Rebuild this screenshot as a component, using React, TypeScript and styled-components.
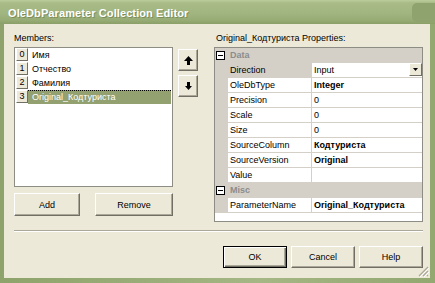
import React from 'react';
import styled, { createGlobalStyle } from 'styled-components';

const GlobalStyle = createGlobalStyle`
  html, body { margin: 0; padding: 0; background: #fff; }
  body { font-family: "Liberation Sans", Arial, sans-serif; font-size: 9px; color: #000; }
  * { box-sizing: border-box; }
`;

const Window = styled.div`
  width: 435px;
  height: 283px;
  display: flex;
  flex-direction: column;
  background: #93a771;
  overflow: hidden;
`;

const TitleBar = styled.div`
  height: 24px;
  flex: none;
  display: flex;
  align-items: center;
  padding: 1px 0 0 8px;
  background: linear-gradient(#bccd9b 0%, #a9bc88 12%, #a1b580 55%, #97ab75 85%, #8a9e68 100%);
`;

const TitleText = styled.span`
  color: #fff;
  font-weight: bold;
  font-size: 11px;
  text-shadow: 1px 1px 0 #7c8f5a;
  letter-spacing: 0.1px;
`;

const CaptionStub = styled.div`
  margin-left: auto;
  width: 23px;
  height: 19px;
  border-radius: 5px 0 0 5px;
  background: #8fa36e;
`;

const Frame = styled.div`
  flex: 1;
  display: flex;
  padding: 0 5px 5px 4px;
  background: linear-gradient(90deg, #8ea26b, #a4b784 60%, #93a771);
`;

const Client = styled.div`
  flex: 1;
  position: relative;
  display: flex;
  flex-direction: column;
  background: #ece9d8;
  padding: 8px 7px 0 10px;
`;

const Top = styled.div`
  display: flex;
  height: 190px;
`;

const Column = styled.div<{ $w: number }>`
  width: ${p => p.$w}px;
  flex: none;
  display: flex;
  flex-direction: column;
`;

const Label = styled.div<{ $indent?: number }>`
  height: 15px;
  line-height: 12px;
  padding-left: ${p => p.$indent ?? 0}px;
  white-space: nowrap;
`;

const ListBox = styled.div`
  height: 140px;
  background: #fff;
  border: 1px solid #8d8c85;
  padding-top: 0;
`;

const ListRow = styled.div`
  height: 14px;
  display: flex;
  padding: 0 1px 0 1px;
`;

const IndexCell = styled.div`
  width: 12px;
  height: 13px;
  flex: none;
  background: #ece9d8;
  border: 1px solid;
  border-color: #fff #716f64 #716f64 #fff;
  line-height: 11px;
  text-align: center;
  font-size: 9px;
`;

const ItemText = styled.div<{ $selected?: boolean }>`
  flex: 1;
  height: 14px;
  line-height: 13px;
  padding-left: 4px;
  background: ${p => (p.$selected ? '#93a070' : 'transparent')};
  color: ${p => (p.$selected ? '#fff' : '#000')};
  border-top: 1px dotted ${p => (p.$selected ? '#000' : 'transparent')};
  white-space: nowrap;
`;

const ButtonRow = styled.div<{ $gap: number; $end?: boolean }>`
  display: flex;
  gap: ${p => p.$gap}px;
  justify-content: ${p => (p.$end ? 'flex-end' : 'flex-start')};
`;

const Button = styled.button<{ $w: number; $h?: number; $default?: boolean }>`
  width: ${p => p.$w}px;
  height: ${p => p.$h ?? 23}px;
  flex: none;
  padding: 0;
  background: #ece9d8;
  font-family: "Liberation Sans", Arial, sans-serif;
  font-size: 9px;
  color: #000;
  border: 1px solid;
  border-color: ${p => (p.$default ? '#000' : '#fff #716f64 #716f64 #fff')};
  box-shadow: ${p =>
    p.$default
      ? 'inset 1px 1px 0 #fff, inset -1px -1px 0 #716f64, inset -2px -2px 0 #aca899'
      : 'inset -1px -1px 0 #aca899'};
  display: flex;
  align-items: center;
  justify-content: center;
`;

const ArrowColumn = styled.div`
  width: 20px;
  flex: none;
  margin-left: 5px;
  margin-right: 16px;
  padding-top: 17px;
  display: flex;
  flex-direction: column;
  gap: 4px;
`;

const Grid = styled.div`
  height: 175px;
  border: 1px solid #8d8c85;
  background: #fff;
  overflow: hidden;
`;

const GridRow = styled.div<{ $category?: boolean }>`
  height: 15px;
  display: flex;
  background: ${p => (p.$category ? '#d4d0c8' : '#fff')};
`;

const Gutter = styled.div`
  width: 13px;
  flex: none;
  background: #d4d0c8;
  display: flex;
  align-items: center;
  padding-left: 1px;
`;

const Expander = styled.div`
  width: 9px;
  height: 9px;
  border: 1px solid #000;
  background: #fff;
  display: flex;
  align-items: center;
  justify-content: center;
  &::after {
    content: '';
    width: 5px;
    height: 1px;
    background: #000;
  }
`;

const CategoryName = styled.div`
  padding-left: 2px;
  line-height: 15px;
  font-weight: bold;
  color: #8c8c8c;
`;

const NameCell = styled.div<{ $selected?: boolean }>`
  width: 84px;
  flex: none;
  padding-left: 2px;
  line-height: 14px;
  border-right: 1px solid #d4d0c8;
  border-bottom: 1px solid #d4d0c8;
  background: ${p => (p.$selected ? '#d4d0c8' : '#fff')};
  white-space: nowrap;
  overflow: hidden;
`;

const ValueCell = styled.div<{ $bold?: boolean }>`
  flex: 1;
  display: flex;
  min-width: 0;
  padding-left: 2px;
  line-height: 14px;
  border-bottom: 1px solid #d4d0c8;
  font-weight: ${p => (p.$bold ? 'bold' : 'normal')};
  white-space: nowrap;
  overflow: hidden;
`;

const DropButton = styled.div`
  margin-left: auto;
  width: 13px;
  height: 13px;
  flex: none;
  background: #ece9d8;
  border: 1px solid;
  border-color: #fff #716f64 #716f64 #fff;
  display: flex;
  align-items: center;
  justify-content: center;
`;

const Separator = styled.div`
  margin-top: 8px;
  height: 2px;
  border-top: 1px solid #aca899;
  border-bottom: 1px solid #fff;
`;

const Footer = styled.div`
  margin-top: 14px;
`;

const Grip = styled.svg`
  position: absolute;
  right: 1px;
  bottom: 1px;
`;

const UpArrow = () => (
  <svg width="9" height="9" viewBox="0 0 9 9">
    <path d="M4.5 0 L9 5 L6 5 L6 9 L3 9 L3 5 L0 5 Z" fill="#000" />
  </svg>
);

const DownArrow = () => (
  <svg width="7" height="8" viewBox="0 0 7 8">
    <path d="M2 0 L5 0 L5 4 L7 4 L3.5 8 L0 4 L2 4 Z" fill="#000" />
  </svg>
);

const members = ['Имя', 'Отчество', 'Фамилия', 'Original_Кодтуриста'];

type Prop = { name: string; value: string; bold?: boolean; selected?: boolean; drop?: boolean };

const dataProps: Prop[] = [
  { name: 'Direction', value: 'Input', selected: true, drop: true },
  { name: 'OleDbType', value: 'Integer', bold: true },
  { name: 'Precision', value: '0' },
  { name: 'Scale', value: '0' },
  { name: 'Size', value: '0' },
  { name: 'SourceColumn', value: 'Кодтуриста', bold: true },
  { name: 'SourceVersion', value: 'Original', bold: true },
  { name: 'Value', value: '' },
];

const miscProps: Prop[] = [{ name: 'ParameterName', value: 'Original_Кодтуриста', bold: true }];

const PropRow = ({ p }: { p: Prop }) => (
  <GridRow>
    <Gutter />
    <NameCell $selected={p.selected}>{p.name}</NameCell>
    <ValueCell $bold={p.bold}>
      {p.value}
      {p.drop && (
        <DropButton>
          <svg width="5" height="3" viewBox="0 0 5 3">
            <path d="M0 0 L5 0 L2.5 3 Z" fill="#000" />
          </svg>
        </DropButton>
      )}
    </ValueCell>
  </GridRow>
);

const Category = ({ name }: { name: string }) => (
  <GridRow $category>
    <Gutter>
      <Expander />
    </Gutter>
    <CategoryName>{name}</CategoryName>
  </GridRow>
);

export default function App() {
  return (
    <>
      <GlobalStyle />
      <Window>
        <TitleBar>
          <TitleText>OleDbParameter Collection Editor</TitleText>
          <CaptionStub />
        </TitleBar>
        <Frame>
          <Client>
            <Top>
              <Column $w={159}>
                <Label>Members:</Label>
                <ListBox>
                  {members.map((m, i) => (
                    <ListRow key={m}>
                      <IndexCell>{i}</IndexCell>
                      <ItemText $selected={i === 3}>{m}</ItemText>
                    </ListRow>
                  ))}
                </ListBox>
                <ButtonRow $gap={15} style={{ marginTop: 6 }}>
                  <Button $w={66}>Add</Button>
                  <Button $w={78}>Remove</Button>
                </ButtonRow>
              </Column>
              <ArrowColumn>
                <Button $w={20} $h={22}>
                  <UpArrow />
                </Button>
                <Button $w={20} $h={22}>
                  <DownArrow />
                </Button>
              </ArrowColumn>
              <Column $w={209}>
                <Label $indent={2}>Original_Кодтуриста Properties:</Label>
                <Grid>
                  <Category name="Data" />
                  {dataProps.map(p => (
                    <PropRow key={p.name} p={p} />
                  ))}
                  <Category name="Misc" />
                  {miscProps.map(p => (
                    <PropRow key={p.name} p={p} />
                  ))}
                </Grid>
              </Column>
            </Top>
            <Separator />
            <Footer>
              <ButtonRow $gap={4} $end>
                <Button $w={64} $h={22} $default>OK</Button>
                <Button $w={64} $h={22}>Cancel</Button>
                <Button $w={64} $h={22}>Help</Button>
              </ButtonRow>
            </Footer>
            <Grip width="12" height="12" viewBox="0 0 12 12">
              <path d="M11 2 L2 11 M11 6 L6 11 M11 10 L10 11" stroke="#aca899" strokeWidth="1.2" />
              <path d="M12 3 L3 12 M12 7 L7 12" stroke="#fff" strokeWidth="1" />
            </Grip>
          </Client>
        </Frame>
      </Window>
    </>
  );
}
